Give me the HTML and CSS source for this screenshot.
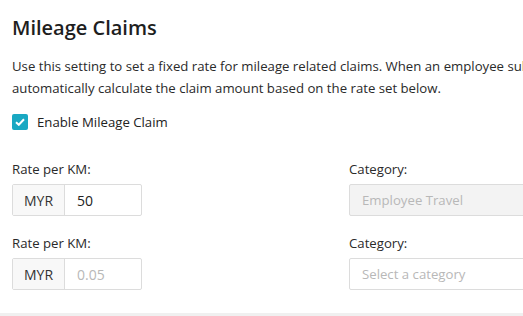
FILE: index.html
```html
<!DOCTYPE html>
<html lang="en">
<head>
<meta charset="UTF-8">
<meta name="viewport" content="width=device-width, initial-scale=1.0">
<title>Mileage Claims</title>
<link rel="stylesheet" href="styles.css">
</head>
<body>
<div class="panel">
    <h2 class="title">Mileage Claims</h2>
    <p class="desc">Use this setting to set a fixed rate for mileage related claims. When an employee submits a claim, the system will<br>automatically calculate the claim amount based on the rate set below.</p>
    <label class="check">
        <span class="box">
            <svg width="10" height="8" viewBox="0 0 10 8"><path d="M1 4.2 L3.8 6.8 L9 1.2" fill="none" stroke="#fff" stroke-width="2"/></svg>
        </span>
        Enable Mileage Claim
    </label>
    <div class="grid">
        <div class="field">
            <label>Rate per KM:</label>
            <div class="group">
                <span class="addon">MYR</span>
                <input type="text" value="50">
            </div>
        </div>
        <div class="field">
            <label>Category:</label>
            <input type="text" class="wide" value="Employee Travel" disabled>
        </div>
        <div class="field">
            <label>Rate per KM:</label>
            <div class="group">
                <span class="addon">MYR</span>
                <input type="text" placeholder="0.05">
            </div>
        </div>
        <div class="field">
            <label>Category:</label>
            <input type="text" class="wide" placeholder="Select a category">
        </div>
    </div>
</div>
<div class="footer"></div>
</body>
</html>
```

FILE: styles.css
```css
body {
    margin: 0;
    font-family: "Open Sans", "Noto Sans", sans-serif;
    color: #222;
    background: #fff;
    overflow: hidden;
}
.panel {
    padding: 14px 0 0 12px;
    height: 313px;
    box-sizing: border-box;
    width: 800px;
}
.title {
    font-size: 20px;
    font-weight: 600;
    margin: 0;
    line-height: 28px;
    color: #1e1e1e;
}
.desc {
    font-size: 13.2px;
    line-height: 22px;
    margin: 13px 0 0;
    white-space: nowrap;
    color: #2a2a2a;
}
.check {
    display: flex;
    align-items: center;
    gap: 9px;
    font-size: 13.2px;
    margin-top: 13px;
    line-height: 20px;
}
.box {
    width: 16px;
    height: 16px;
    background: #19a8c2;
    border-radius: 2px;
    display: flex;
    align-items: center;
    justify-content: center;
}
.grid {
    display: grid;
    grid-template-columns: 337px 240px;
    row-gap: 17px;
    margin-top: 27px;
}
.field label {
    display: block;
    font-size: 13.2px;
    line-height: 20px;
    margin-bottom: 5px;
    color: #2a2a2a;
}
.group {
    display: flex;
    width: 130px;
    height: 32px;
    border: 1px solid #dcdcdc;
    border-radius: 2px;
    box-sizing: border-box;
}
.addon {
    flex: 0 0 51px;
    background: #f8f8f8;
    border-right: 1px solid #dcdcdc;
    display: flex;
    align-items: center;
    justify-content: center;
    font-size: 14px;
    color: #333;
}
.group input {
    border: none;
    min-width: 0;
    flex: 1;
    padding: 0 12px;
    font-family: inherit;
    font-size: 14px;
    color: #222;
    outline: none;
    background: transparent;
}
input::placeholder {
    color: #b8b8b8;
}
.wide {
    width: 240px;
    height: 32px;
    box-sizing: border-box;
    border: 1px solid #dcdcdc;
    border-radius: 2px;
    padding: 0 12px;
    font-family: inherit;
    font-size: 13.2px;
    color: #222;
    background: #fff;
}
.wide:disabled {
    background: #f3f3f3;
    color: #b8b8b8;
}
.footer {
    height: 3px;
    background: #f0f0f0;
}
```
